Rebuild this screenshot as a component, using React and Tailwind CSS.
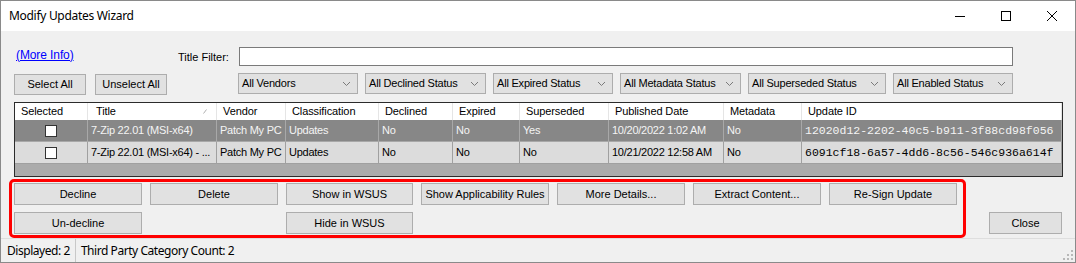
import React from "react";

const cols = [
  { key: "sel", label: "Selected", w: "w-[73px]" },
  { key: "title", label: "Title", w: "w-[129px]" },
  { key: "vendor", label: "Vendor", w: "w-[69px]" },
  { key: "cls", label: "Classification", w: "w-[93px]" },
  { key: "dec", label: "Declined", w: "w-[74px]" },
  { key: "exp", label: "Expired", w: "w-[67px]" },
  { key: "sup", label: "Superseded", w: "w-[89px]" },
  { key: "pub", label: "Published Date", w: "w-[115px]" },
  { key: "meta", label: "Metadata", w: "w-[78px]" },
  { key: "id", label: "Update ID", w: "w-[260px]" },
];

const rows = [
  {
    dark: true,
    title: "7-Zip 22.01 (MSI-x64)",
    vendor: "Patch My PC",
    cls: "Updates",
    dec: "No",
    exp: "No",
    sup: "Yes",
    pub: "10/20/2022 1:02 AM",
    meta: "No",
    id: "12020d12-2202-40c5-b911-3f88cd98f056",
  },
  {
    dark: false,
    title: "7-Zip 22.01 (MSI-x64) - ...",
    vendor: "Patch My PC",
    cls: "Updates",
    dec: "No",
    exp: "No",
    sup: "No",
    pub: "10/21/2022 12:58 AM",
    meta: "No",
    id: "6091cf18-6a57-4dd6-8c56-546c936a614f",
  },
];

function Btn({ children, w = "w-[128px]", h = "h-[22px]" }) {
  return (
    <div
      className={`${w} ${h} shrink-0 bg-[#e1e1e1] border border-[#adadad] flex items-center justify-center text-[11px] text-black whitespace-nowrap`}
    >
      {children}
    </div>
  );
}

function Combo({ label, w }) {
  return (
    <div
      className={`${w} h-[21px] shrink-0 bg-[#e1e1e1] border border-[#adadad] flex items-center pl-[3px] pr-[7px] text-[11px] tracking-[-0.2px] text-black whitespace-nowrap`}
    >
      <span className="flex-1">{label}</span>
      <svg width="7" height="4" viewBox="0 0 7 4" className="shrink-0">
        <polyline points="0,0 3.5,3.5 7,0" fill="none" stroke="#7a7a7a" strokeWidth="1" />
      </svg>
    </div>
  );
}

export default function App() {
  return (
    <div className="w-[1076px] h-[263px] bg-[#f0f0f0] border border-[#8a8a8a] flex flex-col overflow-hidden font-['Liberation_Sans',Arial,sans-serif] text-[11px] text-black">
      {/* Title bar */}
      <div className="h-[30px] shrink-0 bg-white flex items-center">
        <span className="ml-[8px] text-[12px] font-['Noto_Sans',sans-serif] text-black tracking-[-0.3px]">
          Modify Updates Wizard
        </span>
        <div className="ml-auto flex h-full">
          <div className="w-[46px] h-full flex items-center justify-center">
            <svg width="10" height="10" viewBox="0 0 10 10">
              <line x1="0" y1="5.5" x2="10" y2="5.5" stroke="#000" strokeWidth="1" />
            </svg>
          </div>
          <div className="w-[46px] h-full flex items-center justify-center">
            <svg width="10" height="10" viewBox="0 0 10 10">
              <rect x="0.5" y="0.5" width="9" height="9" fill="none" stroke="#000" strokeWidth="1" />
            </svg>
          </div>
          <div className="w-[46px] h-full flex items-center justify-center">
            <svg width="10" height="10" viewBox="0 0 10 10">
              <line x1="0" y1="0" x2="10" y2="10" stroke="#000" strokeWidth="1" />
              <line x1="10" y1="0" x2="0" y2="10" stroke="#000" strokeWidth="1" />
            </svg>
          </div>
        </div>
      </div>

      {/* Row A */}
      <div className="mt-[16px] h-[19px] flex items-center shrink-0">
        <div className="ml-[15px] w-[162px] shrink-0 -mt-[4px]">
          <span className="text-[#0000ff] underline text-[12px] tracking-[-0.1px]">(More Info)</span>
        </div>
        <div className="w-[61px] shrink-0 text-[11px] pt-[1px]">Title Filter:</div>
        <div className="w-[774px] h-[19px] shrink-0 bg-white border border-[#7a7a7a]" />
      </div>

      {/* Row B */}
      <div className="mt-[7px] h-[22px] flex items-start shrink-0">
        <div className="ml-[13px] mt-[1px] flex gap-[9px]">
          <Btn w="w-[72px]" h="h-[21px]">Select All</Btn>
          <Btn w="w-[72px]" h="h-[21px]">Unselect All</Btn>
        </div>
        <div className="ml-[71px] flex gap-[7px]">
          <Combo label="All Vendors" w="w-[120px]" />
          <Combo label="All Declined Status" w="w-[121px]" />
          <Combo label="All Expired Status" w="w-[120px]" />
          <Combo label="All Metadata Status" w="w-[121px]" />
          <Combo label="All Superseded Status" w="w-[138px]" />
          <Combo label="All Enabled Status" w="w-[120px]" />
        </div>
      </div>

      {/* Table */}
      <div className="mt-[7px] ml-[13px] w-[1049px] h-[75px] shrink-0 border border-[#2b2b2b] bg-[#ababab] flex flex-col">
        <div className="h-[17px] bg-white flex shrink-0">
          {cols.map((c) => (
            <div
              key={c.key}
              className={`${c.w} shrink-0 h-full border-r border-[#e5e5e5] flex items-center ${
                c.key === "title" ? "pl-[8px] pr-[8px]" : "pl-[6px]"
              } text-[11px] tracking-[-0.1px] whitespace-nowrap`}
            >
              <span className="flex-1">{c.label}</span>
              {c.key === "title" && (
                <svg width="4" height="5" viewBox="0 0 4 5" className="shrink-0 mr-[1px]">
                  <line x1="0.5" y1="4.5" x2="3.5" y2="0.5" stroke="#b0b0b0" strokeWidth="1" />
                </svg>
              )}
            </div>
          ))}
        </div>
        {rows.map((r, i) => (
          <div
            key={i}
            className={`h-[22px] flex shrink-0 ${
              r.dark ? "bg-[#878787] text-[#f4f4f4]" : "bg-[#dcdcdc] text-black"
            }`}
          >
            {cols.map((c) => (
              <div
                key={c.key}
                className={`${c.w} shrink-0 h-full border-r border-b ${
                  r.dark ? "border-[#a8a8a8]" : "border-[#a0a0a0]"
                } flex items-center overflow-hidden whitespace-nowrap ${
                  c.key === "sel" ? "justify-center" : "pl-[3px]"
                } ${
                  c.key === "id"
                    ? "font-['Liberation_Mono',monospace] text-[11.5px]"
                    : "text-[11px] tracking-[-0.25px]"
                }`}
              >
                {c.key === "sel" ? (
                  <div className="w-[12px] h-[12px] bg-white border border-[#333333]" />
                ) : (
                  r[c.key]
                )}
              </div>
            ))}
          </div>
        ))}
      </div>

      {/* Action area */}
      <div className="mt-[2px] flex items-end shrink-0">
        <div className="ml-[8px] w-[957px] border-[3px] border-[#ff0000] rounded-[5px] pt-[1px] pb-[1px] pl-[2px] flex flex-col gap-[7px]">
          <div className="flex gap-[8px]">
            <Btn>Decline</Btn>
            <Btn>Delete</Btn>
            <Btn w="w-[127px]">Show in WSUS</Btn>
            <Btn>Show Applicability Rules</Btn>
            <Btn>More Details...</Btn>
            <Btn>Extract Content...</Btn>
            <Btn>Re-Sign Update</Btn>
          </div>
          <div className="flex gap-[8px]">
            <Btn>Un-decline</Btn>
            <div className="w-[128px] shrink-0" />
            <Btn w="w-[127px]">Hide in WSUS</Btn>
          </div>
        </div>
        <div className="ml-[23px] mb-[4px]">
          <Btn w="w-[73px]">Close</Btn>
        </div>
      </div>

      {/* Status bar */}
      <div className="flex-1 flex items-center border-t border-[#dedede] relative">
        <span className="ml-[6px] text-[12px] font-['Noto_Sans',sans-serif] tracking-[-0.45px]">Displayed: 2</span>
        <div className="ml-[5px] w-px self-stretch bg-[#c8c8c8]" />
        <span className="ml-[5px] text-[12px] font-['Noto_Sans',sans-serif] tracking-[-0.45px]">
          Third Party Category Count: 2
        </span>
        <svg width="10" height="10" viewBox="0 0 10 10" className="absolute right-[2px] bottom-[2px]">
          <rect x="8" y="0" width="2" height="2" fill="#b8b8b8" />
          <rect x="4" y="4" width="2" height="2" fill="#b8b8b8" />
          <rect x="8" y="4" width="2" height="2" fill="#b8b8b8" />
          <rect x="0" y="8" width="2" height="2" fill="#b8b8b8" />
          <rect x="4" y="8" width="2" height="2" fill="#b8b8b8" />
          <rect x="8" y="8" width="2" height="2" fill="#b8b8b8" />
        </svg>
      </div>
    </div>
  );
}
